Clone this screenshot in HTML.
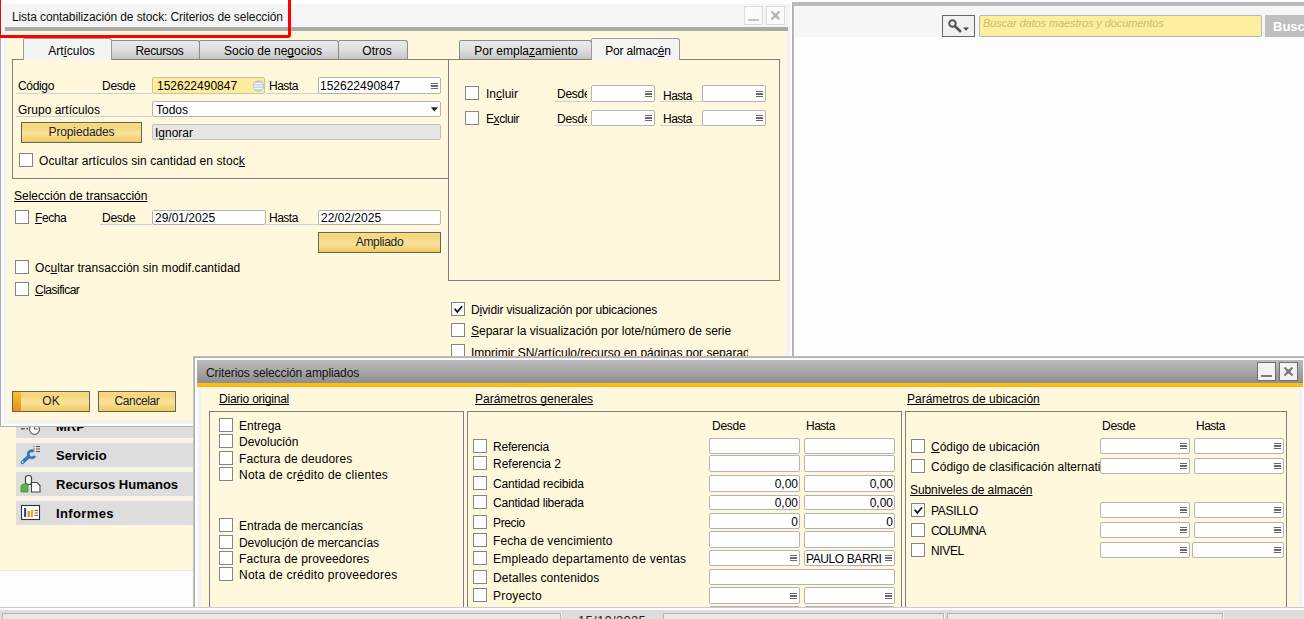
<!DOCTYPE html>
<html lang="es"><head><meta charset="utf-8"><title>SAP Business One</title>
<style>
html,body{margin:0;padding:0}
body{width:1304px;height:619px;overflow:hidden;position:relative;background:#fdfdfd;font-family:"Liberation Sans",sans-serif;font-size:12px;color:#000}
div,span,i,b,svg.abs{position:absolute;box-sizing:border-box}
#main,#w1,#w2,#sb{left:0;top:0;width:1304px;height:619px;overflow:hidden}
.ws{background:#fdfdfd}
.t{line-height:14px;white-space:nowrap;color:#000;text-decoration-skip-ink:none}
u{text-decoration-skip-ink:none}
.wframe{background:#f3f3f3}
.panel{border:1px solid #7f7f7f}
.tab{border:1px solid #8c8c8c;border-bottom:none;border-radius:2px 3px 0 0;background:linear-gradient(#e9e9e9,#e0e0e0 45%,#c6c6c6);text-align:center}
.tab.act{background:#f4f4f4;z-index:2;border-color:#9a9a9a}
.tab span{left:8px;right:0;line-height:14px;white-space:nowrap}
.cb{width:14px;height:14px;border:1px solid #80868c;background:#fff}
.cb svg{position:absolute;left:0;top:0}
.in{background:#fff;border:1px solid #b4b4b4;border-radius:2px}
.in .v{line-height:14px;white-space:nowrap;display:block;overflow:hidden}
.in.foc{background:#feec9e;border-color:#c9c3a3}
.in.dis{background:#e6e6e6;border-color:#c2c2c2}
.mn{right:2px;top:50%;margin-top:-3px;width:7px;height:6px;background:linear-gradient(#686868 0 1.300px,transparent 1.300px 2.350px,#686868 2.350px 3.650px,transparent 3.650px 4.700px,#686868 4.700px 6px)}
.ul{height:1px;background:#c9d3d6}
.btn{border:1px solid #66635a;background:linear-gradient(#f8dc8a,#f5d578 15%,#f9e29c 55%,#f2ca5c);text-align:center}
.btn span{left:0;right:0;top:2px;line-height:14px;color:#222}
.btn.ok b{left:0;top:0;bottom:0;width:8px;background:linear-gradient(#f8c236,#ee8a1a)}
.mband{background:#dddddd}
.mt{font-weight:bold;font-size:13px;line-height:16px;white-space:nowrap;color:#000}
.sbtn{border:1px solid #686868;background:#f1f1f1}
.sin{border:1px solid #b9b9a8;background:#feef9d;border-radius:2px}
.sin span{left:3px;top:-1px;line-height:16px;font-size:11px;letter-spacing:-0.1px;font-style:italic;color:#cbbd72;white-space:nowrap}
.sgo{background:#bfbfbf;color:#fff;font-weight:bold;font-size:13px;line-height:24px;padding-left:8px}
.wb1{width:19px;height:19px;border:1px solid #dcdcdc;background:#fbfbfb}
.wb2{width:19px;height:19px;border:1px solid #707070;background:#f2f2f2}
.tbar2{background:linear-gradient(#bcbcbc,#a6a6a6 50%,#8c8e90)}
#red{left:-2px;top:-3px;width:293px;height:41px;border:3px solid #f00;border-radius:0 0 3px 0}
</style></head>
<body>
<div id="main">
<div class="ws" style="left:794px;top:0px;width:510px;height:619px;"></div>
<div style="left:792px;top:2px;width:512px;height:4px;background:#b9b9b9"></div>
<div style="left:794px;top:6px;width:510px;height:31px;background:#f6f6f6"></div>
<div style="left:792px;top:2px;width:2px;height:617px;background:linear-gradient(90deg,#a6a6a6,#c4c4c4)"></div>
<div class="sbtn" style="left:942px;top:15px;width:33px;height:22px"><svg width="31" height="20" viewBox="0 0 31 20"><circle cx="9.5" cy="7.5" r="3.3" fill="none" stroke="#555" stroke-width="2"/><path d="M12 10.2 L17.3 15.2" stroke="#555" stroke-width="2.6" stroke-linecap="round"/><path d="M20 11.5 h6 l-3 3.2z" fill="#444"/></svg></div>
<div class="sin" style="left:979px;top:15px;width:283px;height:22px"><span>Buscar datos maestros y documentos</span></div>
<div class="sgo" style="left:1265px;top:15px;width:60px;height:22px">Buscar</div>
<div style="left:0px;top:420px;width:194px;height:150px;background:#fff8dc"></div>
<div style="left:16px;top:427px;width:178px;height:98px;background:#f7f3e6"></div>
<div style="left:0px;top:570px;width:194px;height:37px;background:#fdfdfd"></div>
<div style="left:0px;top:570px;width:194px;height:1px;background:#e6e6e6"></div>
<div class="mband" style="left:16px;top:414px;width:178px;height:24px;"></div>
<span class="mt" style="left:56px;top:419px">MRP</span>
<div class="mband" style="left:16px;top:443px;width:178px;height:24px;"></div>
<span class="mt" style="left:56px;top:448px">Servicio</span>
<div class="mband" style="left:16px;top:472px;width:178px;height:24px;"></div>
<span class="mt" style="left:56px;top:477px">Recursos Humanos</span>
<div class="mband" style="left:16px;top:501px;width:178px;height:24px;"></div>
<span class="mt" style="left:56px;top:506px;letter-spacing:0.38px">Informes</span>
<svg class="abs" style="left:18px;top:420px" width="26" height="106" viewBox="0 -20 26 106">
<circle cx="16.500" cy="-10.700" r="5" fill="#fff" stroke="#666" stroke-width="1.300"/>
<path d="M16.500 -14v3h3.200" fill="none" stroke="#666" stroke-width="1.200"/>
<path d="M3 -11.200h3.800M8.200 -11.200h1.800" stroke="#666" stroke-width="1.600"/>
<path d="M4.300 22.300 L10.200 17.200" stroke="#2d7cc0" stroke-width="3.600" stroke-linecap="round"/>
<path d="M15.600 11.300 A3.500 3.500 0 1 0 16.900 15.800" fill="none" stroke="#2d7cc0" stroke-width="2.800"/>
<circle cx="4.600" cy="22" r="0.900" fill="#d8e8f6"/>
<path d="M15.500 6.500h1M18 6.500h4M15.500 9h1M18 9h4M15.500 11.500h1M18 11.500h4" stroke="#555" stroke-width="1"/>
<rect x="7.500" y="35.500" width="6" height="9" rx="2.600" fill="#fff" stroke="#444" stroke-width="1.200"/>
<path d="M3 52 v-5 c0-2 1.500-3 3.500-3 h3.500 v8z" fill="#5bb548" stroke="#3d8b30" stroke-width="0.8"/>
<path d="M13.500 42.500 h5.500 l3 3 v6.500 h-8.500z" fill="#fff" stroke="#444" stroke-width="1.100"/>
<rect x="3.500" y="65.500" width="18" height="14" fill="#fff" stroke="#333" stroke-width="1.100"/>
<rect x="6" y="68" width="2.200" height="9" fill="#2a4fb0"/>
<rect x="9.600" y="71" width="2.200" height="6" fill="#f08a1c"/>
<rect x="12.800" y="70" width="2.200" height="7" fill="#f6a21c"/>
<path d="M16.500 70.500h3.500M16.500 73h3.500M16.500 75.500h3.500" stroke="#666" stroke-width="1"/>
</svg>
</div>
<div id="w1">
<div style="left:0px;top:0px;width:792px;height:427px;background:#fdfdfd"></div>
<div class="wframe" style="left:4px;top:4px;width:786px;height:420px;"></div>
<div style="left:0px;top:38px;width:1px;height:389px;background:#a8a8a8"></div>
<div style="left:0px;top:426px;width:195px;height:1px;background:#b2b2b2"></div>
<div style="left:3px;top:4px;width:787px;height:23px;background:#f5f5f5"></div>
<div style="left:5px;top:27px;width:783px;height:4px;background:#a9a9a9"></div>
<div style="left:7px;top:31px;width:779px;height:389px;background:#fff8dc"></div>
<span class="t" style="left:12px;top:10px;color:#111;letter-spacing:-0.11px">Lista contabilización de stock: Criterios de selección</span>
<div class="wb1" style="left:744px;top:6px"><i style="left:3px;top:12px;width:11px;height:2px;background:#c4c4c4"></i></div>
<div class="wb1" style="left:766px;top:6px"><svg width="17" height="17" viewBox="0 0 17 17"><path d="M4.500 4.500 L12.500 12.500 M12.500 4.500 L4.500 12.500" stroke="#b4b4b4" stroke-width="2"/><rect x="6.500" y="6.500" width="4" height="4" fill="#b4b4b4"/></svg></div>
<div class="panel" style="left:12px;top:59px;width:437px;height:120px;"></div>
<div class="tab act" style="left:23px;top:38px;width:89px;height:22px"><span style="top:5px">Art<u>í</u>culos</span></div>
<div class="tab" style="left:111px;top:40px;width:89px;height:19px"><span style="top:3px;letter-spacing:-0.35px">Recursos</span></div>
<div class="tab" style="left:199px;top:40px;width:140px;height:19px"><span style="top:3px">Socio de ne<u>g</u>ocios</span></div>
<div class="tab" style="left:338px;top:40px;width:70px;height:19px"><span style="top:3px">Otros</span></div>
<span class="t" style="left:18px;top:79px;;letter-spacing:-0.33px;">Código</span>
<span class="t" style="left:102px;top:79px;;letter-spacing:-0.25px;">Desde</span>
<div class="ul" style="left:16px;top:93px;width:136px"></div>
<div class="in foc" style="left:152px;top:77px;width:113px;height:17px"><span class="v" style="top:1px;text-align:left;left:4px;right:4px">152622490847</span></div>
<svg class="abs" style="left:252px;top:79px" width="13" height="14" viewBox="0 0 13 14"><circle cx="6.500" cy="7" r="5.600" fill="#cbd7e2"/><circle cx="6.500" cy="7" r="5.100" fill="none" stroke="#b4c4d2" stroke-width="1"/><path d="M2.500 4.500h8M1.800 7h9.400M2.500 9.500h8" stroke="#f4f7fa" stroke-width="1.200"/></svg>
<span class="t" style="left:269px;top:79px;;letter-spacing:-0.5px;">Hasta</span>
<div class="ul" style="left:266px;top:93px;width:53px"></div>
<div class="in" style="left:318px;top:77px;width:123px;height:17px"><span class="v" style="top:1px;text-align:left;left:1px;right:12px">152622490847</span><i class="mn"></i></div>
<span class="t" style="left:18px;top:103px;">Grupo artículos</span>
<div class="ul" style="left:16px;top:116px;width:136px"></div>
<div class="in" style="left:152px;top:101px;width:289px;height:16px"><span class="v" style="top:1px;text-align:left;left:3px;right:3px">Todos</span></div>
<svg class="abs" style="left:430px;top:107px" width="9" height="6" viewBox="0 0 9 6"><path d="M0.800 0.300h7.200l-3.600 4.300z" fill="#222"/></svg>
<div class="btn" style="left:21px;top:122px;width:121px;height:21px"><span style="letter-spacing:-0.14px">Propiedades</span></div>
<div class="in dis" style="left:152px;top:124px;width:289px;height:16px"><span class="v" style="top:1px;text-align:left;left:2px;right:2px">Ignorar</span></div>
<div class="cb" style="left:19px;top:153px"></div>
<span class="t" style="left:39px;top:154px;;letter-spacing:0.08px;">Ocultar artículos sin cantidad en stoc<u>k</u></span>
<span class="t" style="left:14px;top:189px;text-decoration:underline">Selección de transacción</span>
<div class="cb" style="left:15px;top:210px"></div>
<span class="t" style="left:35px;top:211px;;letter-spacing:-0.4px;"><u>F</u>echa</span>
<span class="t" style="left:102px;top:211px;;letter-spacing:-0.25px;">Desde</span>
<div class="ul" style="left:100px;top:224px;width:52px"></div>
<div class="in" style="left:152px;top:210px;width:114px;height:15px"><span class="v" style="top:0px;text-align:left;left:2px;right:2px">29/01/2025</span></div>
<span class="t" style="left:269px;top:211px;;letter-spacing:-0.5px;">Hasta</span>
<div class="ul" style="left:266px;top:224px;width:53px"></div>
<div class="in" style="left:318px;top:210px;width:123px;height:15px"><span class="v" style="top:0px;text-align:left;left:2px;right:2px">22/02/2025</span></div>
<div class="btn" style="left:318px;top:232px;width:123px;height:21px"><span style="letter-spacing:-0.3px">Ampliado</span></div>
<div class="cb" style="left:15px;top:260px"></div>
<span class="t" style="left:35px;top:261px;;letter-spacing:0.05px;">Oc<u>u</u>ltar transacción sin modif.cantidad</span>
<div class="cb" style="left:15px;top:282px"></div>
<span class="t" style="left:35px;top:283px;;letter-spacing:-0.5px;"><u>C</u>lasificar</span>
<div class="btn ok" style="left:12px;top:391px;width:78px;height:21px"><b></b><span>OK</span></div>
<div class="btn" style="left:98px;top:391px;width:78px;height:21px"><span><span style="position:static;letter-spacing:-0.4px">Cancelar</span></span></div>
<div class="panel" style="left:448px;top:59px;width:332px;height:222px;"></div>
<div class="tab" style="left:459px;top:40px;width:133px;height:19px"><span style="top:3px;left:1px">Por empla<u>z</u>amiento</span></div>
<div class="tab act" style="left:591px;top:38px;width:89px;height:22px"><span style="top:5px;left:5px;letter-spacing:-0.16px">Por almac<u>é</u>n</span></div>
<div class="cb" style="left:465px;top:86px"></div>
<span class="t" style="left:486px;top:87px;">In<u>c</u>luir</span>
<span class="t" style="left:557px;top:87px;width:30px;overflow:hidden;;letter-spacing:-0.25px;">Desde</span>
<div class="ul" style="left:555px;top:101px;width:36px"></div>
<div class="in" style="left:591px;top:85px;width:64px;height:17px"><i class="mn"></i></div>
<span class="t" style="left:663px;top:89px;;letter-spacing:-0.5px;">Hasta</span>
<div class="ul" style="left:660px;top:101px;width:43px"></div>
<div class="in" style="left:702px;top:85px;width:64px;height:17px"><i class="mn"></i></div>
<div class="cb" style="left:465px;top:111px"></div>
<span class="t" style="left:486px;top:112px;;letter-spacing:-0.43px;">E<u>x</u>cluir</span>
<span class="t" style="left:557px;top:112px;width:30px;overflow:hidden;;letter-spacing:-0.25px;">Desde</span>
<div class="ul" style="left:555px;top:125px;width:36px"></div>
<div class="in" style="left:591px;top:110px;width:64px;height:16px"><i class="mn"></i></div>
<span class="t" style="left:663px;top:112px;;letter-spacing:-0.5px;">Hasta</span>
<div class="ul" style="left:660px;top:125px;width:43px"></div>
<div class="in" style="left:702px;top:110px;width:64px;height:16px"><i class="mn"></i></div>
<div class="cb" style="left:451px;top:302px"><svg width="12" height="12" viewBox="0 0 12 12"><path d="M2.600 5.800 L5.300 8.900 L10.200 3.300" fill="none" stroke="#111" stroke-width="1.700"/></svg></div>
<span class="t" style="left:471px;top:303px;;letter-spacing:-0.16px;">D<u>i</u>vidir visualización por ubicaciones</span>
<div class="cb" style="left:451px;top:323px"></div>
<span class="t" style="left:471px;top:324px;"><u>S</u>eparar la visualización por lote/número de serie</span>
<div class="cb" style="left:451px;top:344px"></div>
<span class="t" style="left:471px;top:346px;width:277px;overflow:hidden;">Imprimir SN/artículo/recurso en páginas por separad</span>
</div>
<div id="w2">
<div style="left:193px;top:356px;width:1111px;height:252px;background:#fdfdfd"></div>
<div style="left:193px;top:356px;width:1111px;height:2px;background:linear-gradient(#c6c6c6,#a9a9a9)"></div>
<div style="left:193px;top:356px;width:2px;height:252px;background:linear-gradient(90deg,#cbcbcb,#a4a4a4)"></div>
<div style="left:198px;top:387px;width:3px;height:221px;background:#f1f2f5"></div>
<div style="left:1299px;top:387px;width:3px;height:221px;background:#f0f2f6"></div>
<div class="tbar2" style="left:197px;top:360px;width:1106px;height:23px;"></div>
<div style="left:197px;top:383px;width:1106px;height:4px;background:linear-gradient(#fec011,#f9b214)"></div>
<div style="left:201px;top:387px;width:1098px;height:220px;background:#fff8dc"></div>
<span class="t" style="left:206px;top:366px;color:#111;letter-spacing:-0.1px">Criterios selección ampliados</span>
<div class="wb2" style="left:1257px;top:362px"><i style="left:3px;top:12px;width:11px;height:2px;background:#7a7a7a"></i></div>
<div class="wb2" style="left:1279px;top:362px"><svg width="17" height="17" viewBox="0 0 17 17"><path d="M4.500 4.500 L12.500 12.500 M12.500 4.500 L4.500 12.500" stroke="#777" stroke-width="2"/><rect x="6.500" y="6.500" width="4" height="4" fill="#777"/></svg></div>
<span class="t" style="left:219px;top:392px;text-decoration:underline;letter-spacing:-0.22px;">Diario original</span>
<span class="t" style="left:475px;top:392px;text-decoration:underline">Parámetros generales</span>
<span class="t" style="left:907px;top:392px;text-decoration:underline">Parámetros de ubicación</span>
<div class="panel" style="left:209px;top:411px;width:255px;height:200px;"></div>
<div class="panel" style="left:467px;top:411px;width:435px;height:200px;"></div>
<div class="panel" style="left:905px;top:411px;width:382px;height:200px;"></div>
<div class="cb" style="left:219px;top:418px"></div>
<span class="t" style="left:239px;top:419px;">Entrega</span>
<div class="cb" style="left:219px;top:434px"></div>
<span class="t" style="left:239px;top:435px;">Devolución</span>
<div class="cb" style="left:219px;top:451px"></div>
<span class="t" style="left:239px;top:452px;;letter-spacing:0.14px;">Factura de deudores</span>
<div class="cb" style="left:219px;top:467px"></div>
<span class="t" style="left:239px;top:468px;;letter-spacing:0.26px;">Nota de cr<u>é</u>dito de clientes</span>
<div class="cb" style="left:219px;top:518px"></div>
<span class="t" style="left:239px;top:519px;">Entrada de mercancías</span>
<div class="cb" style="left:219px;top:535px"></div>
<span class="t" style="left:239px;top:536px;;letter-spacing:-0.06px;">Devoluc<u>i</u>ón de mercancías</span>
<div class="cb" style="left:219px;top:551px"></div>
<span class="t" style="left:239px;top:552px;;letter-spacing:0.14px;">Factura de proveedores</span>
<div class="cb" style="left:219px;top:567px"></div>
<span class="t" style="left:239px;top:568px;;letter-spacing:0.26px;">Nota de crédito proveedores</span>
<span class="t" style="left:712px;top:419px;;letter-spacing:-0.25px;">Desde</span>
<span class="t" style="left:806px;top:419px;;letter-spacing:-0.5px;">Hasta</span>
<div class="cb" style="left:473px;top:439px"></div>
<span class="t" style="left:493px;top:440px;;letter-spacing:-0.2px;">Referencia</span>
<div class="in" style="left:709px;top:438px;width:91px;height:16px"></div>
<div class="in" style="left:804px;top:438px;width:91px;height:16px"></div>
<div class="cb" style="left:473px;top:456px"></div>
<span class="t" style="left:493px;top:457px;">Referencia 2</span>
<div class="in" style="left:709px;top:455px;width:91px;height:17px"></div>
<div class="in" style="left:804px;top:455px;width:91px;height:17px"></div>
<div class="cb" style="left:473px;top:476px"></div>
<span class="t" style="left:493px;top:477px;;letter-spacing:-0.15px;">Cantidad recibida</span>
<div class="in" style="left:709px;top:475px;width:91px;height:17px"><span class="v" style="top:1px;text-align:right;left:1px;right:1px">0,00</span></div>
<div class="in" style="left:804px;top:475px;width:91px;height:17px"><span class="v" style="top:1px;text-align:right;left:1px;right:1px">0,00</span></div>
<div class="cb" style="left:473px;top:495px"></div>
<span class="t" style="left:493px;top:496px;;letter-spacing:-0.19px;">Cantidad liberada</span>
<div class="in" style="left:709px;top:495px;width:91px;height:15px"><span class="v" style="top:0px;text-align:right;left:1px;right:1px">0,00</span></div>
<div class="in" style="left:804px;top:495px;width:91px;height:15px"><span class="v" style="top:0px;text-align:right;left:1px;right:1px">0,00</span></div>
<div class="cb" style="left:473px;top:515px"></div>
<span class="t" style="left:493px;top:516px;;letter-spacing:-0.35px;">Precio</span>
<div class="in" style="left:709px;top:513px;width:91px;height:16px"><span class="v" style="top:1px;text-align:right;left:1px;right:1px">0</span></div>
<div class="in" style="left:804px;top:513px;width:91px;height:16px"><span class="v" style="top:1px;text-align:right;left:1px;right:1px">0</span></div>
<div class="cb" style="left:473px;top:533px"></div>
<span class="t" style="left:493px;top:534px;;letter-spacing:0.11px;">Fecha de vencimiento</span>
<div class="in" style="left:709px;top:531px;width:91px;height:17px"></div>
<div class="in" style="left:804px;top:531px;width:91px;height:17px"></div>
<div class="cb" style="left:473px;top:551px"></div>
<span class="t" style="left:493px;top:552px;;letter-spacing:0.21px;">Empleado departamento de ventas</span>
<div class="in" style="left:709px;top:550px;width:91px;height:16px"><i class="mn"></i></div>
<div class="in" style="left:804px;top:550px;width:91px;height:16px"><span class="v" style="top:1px;text-align:left;left:1px;right:12px"><span style="position:static;letter-spacing:-0.4px">PAULO BARRI</span></span><i class="mn"></i></div>
<div class="cb" style="left:473px;top:570px"></div>
<span class="t" style="left:493px;top:571px;;letter-spacing:0.09px;">Detalles contenidos</span>
<div class="in" style="left:709px;top:569px;width:186px;height:16px"></div>
<div class="cb" style="left:473px;top:588px"></div>
<span class="t" style="left:493px;top:589px;;letter-spacing:0.2px;">Proyecto</span>
<div class="in" style="left:709px;top:587px;width:91px;height:17px"><i class="mn"></i></div>
<div class="in" style="left:804px;top:587px;width:91px;height:17px"><i class="mn"></i></div>
<div class="in" style="left:709px;top:606px;width:91px;height:6px"></div>
<div class="in" style="left:804px;top:606px;width:91px;height:6px"></div>
<span class="t" style="left:1102px;top:419px;;letter-spacing:-0.25px;">Desde</span>
<span class="t" style="left:1196px;top:419px;;letter-spacing:-0.5px;">Hasta</span>
<div class="cb" style="left:911px;top:439px"></div>
<span class="t" style="left:931px;top:440px;width:169px;overflow:hidden;"><u>C</u>ódigo de ubicación</span>
<div class="in" style="left:1100px;top:438px;width:90px;height:16px"><i class="mn"></i></div>
<div class="in" style="left:1194px;top:438px;width:90px;height:16px"><i class="mn"></i></div>
<div class="cb" style="left:911px;top:459px"></div>
<span class="t" style="left:931px;top:460px;width:169px;overflow:hidden;;letter-spacing:0.02px;">Código de clasificación alternativa</span>
<div class="in" style="left:1100px;top:458px;width:90px;height:16px"><i class="mn"></i></div>
<div class="in" style="left:1194px;top:458px;width:90px;height:16px"><i class="mn"></i></div>
<span class="t" style="left:910px;top:483px;text-decoration:underline;letter-spacing:-0.08px;">Subniveles de almacén</span>
<div class="cb" style="left:911px;top:503px"><svg width="12" height="12" viewBox="0 0 12 12"><path d="M2.600 5.800 L5.300 8.900 L10.200 3.300" fill="none" stroke="#111" stroke-width="1.700"/></svg></div>
<span class="t" style="left:931px;top:504px;;letter-spacing:-0.3px;">PASILLO</span>
<div class="in" style="left:1100px;top:502px;width:90px;height:16px"><i class="mn"></i></div>
<div class="in" style="left:1194px;top:502px;width:90px;height:16px"><i class="mn"></i></div>
<div class="cb" style="left:911px;top:523px"></div>
<span class="t" style="left:931px;top:524px;;letter-spacing:-0.8px;">COLUMNA</span>
<div class="in" style="left:1100px;top:522px;width:90px;height:16px"><i class="mn"></i></div>
<div class="in" style="left:1194px;top:522px;width:90px;height:16px"><i class="mn"></i></div>
<div class="cb" style="left:911px;top:543px"></div>
<span class="t" style="left:931px;top:544px;;letter-spacing:-0.35px;">NIVEL</span>
<div class="in" style="left:1100px;top:542px;width:90px;height:16px"><i class="mn"></i></div>
<div class="in" style="left:1192px;top:542px;width:92px;height:16px"><i class="mn"></i></div>
</div>
<div id="sb">
<div style="left:0px;top:607px;width:1304px;height:12px;background:#fdfdfd"></div>
<div style="left:0px;top:607px;width:1304px;height:1px;background:#cbcbcb"></div>
<div style="left:0px;top:610px;width:1304px;height:9px;background:#dddddd"></div>
<div style="left:2px;top:613px;width:559px;height:7px;background:#e8e8e8;border:1px solid #b4b4b4;box-shadow:1px 0 0 #f4f4f4"></div>
<div style="left:663px;top:613px;width:281px;height:7px;background:#e8e8e8;border:1px solid #b4b4b4;box-shadow:1px 0 0 #f4f4f4"></div>
<div style="left:947px;top:613px;width:276px;height:7px;background:#e8e8e8;border:1px solid #b4b4b4;box-shadow:1px 0 0 #f4f4f4"></div>
<span class="t" style="left:578px;top:614px;font-size:13px;letter-spacing:0.3px;color:#222">15/10/2025</span>
</div>
<div id="red"></div>
</body></html>
